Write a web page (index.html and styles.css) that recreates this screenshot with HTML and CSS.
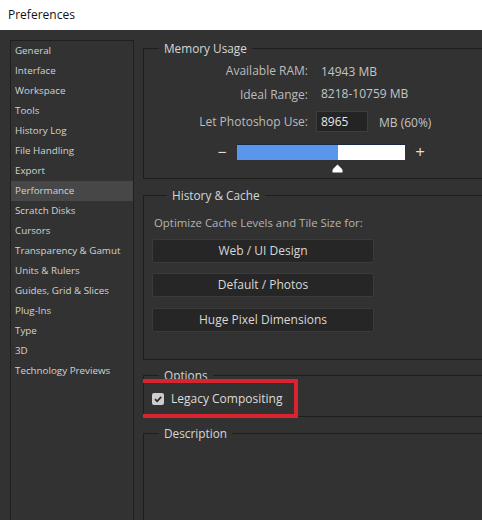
FILE: index.html
```html
<!DOCTYPE html>
<html>
<head>
<meta charset="utf-8">
<link rel="stylesheet" href="styles.css">
</head>
<body>
<div class="titlebar">Preferences</div>
<div class="main">
  <ul class="sidebar">
    <li>General</li>
    <li>Interface</li>
    <li>Workspace</li>
    <li>Tools</li>
    <li>History Log</li>
    <li>File Handling</li>
    <li>Export</li>
    <li class="active">Performance</li>
    <li>Scratch Disks</li>
    <li>Cursors</li>
    <li>Transparency &amp; Gamut</li>
    <li>Units &amp; Rulers</li>
    <li>Guides, Grid &amp; Slices</li>
    <li>Plug-Ins</li>
    <li>Type</li>
    <li>3D</li>
    <li>Technology Previews</li>
  </ul>
  <div class="content">
    <fieldset class="group memory">
      <legend>Memory Usage</legend>
      <div class="stats">
        <span class="label">Available RAM:</span><span class="value">14943 MB</span>
        <span class="label">Ideal Range:</span><span class="value">8218-10759 MB</span>
        <span class="label use">Let Photoshop Use:</span>
        <span class="use-row"><span class="input">8965</span><span class="value">MB (60%)</span></span>
      </div>
      <div class="slider">
        <span class="sign">&minus;</span>
        <div class="track-wrap">
          <div class="track"><div class="fill" style="width:60%"></div></div>
          <div class="thumb-row" style="padding-left:60%">
            <svg class="thumb" width="11" height="9" viewBox="0 0 11 9"><path d="M5.5 0.5 L9.5 4.5 Q10.5 5.5 10.5 6.5 L10.5 8.5 L0.5 8.5 L0.5 6.5 Q0.5 5.5 1.5 4.5 Z" fill="#ffffff"/></svg>
          </div>
        </div>
        <span class="sign plus">+</span>
      </div>
    </fieldset>

    <fieldset class="group history">
      <legend>History &amp; Cache</legend>
      <div class="hint">Optimize Cache Levels and Tile Size for:</div>
      <div class="buttons">
        <div class="btn">Web / UI Design</div>
        <div class="btn">Default / Photos</div>
        <div class="btn">Huge Pixel Dimensions</div>
      </div>
    </fieldset>

    <fieldset class="group options">
      <legend>Options</legend>
      <div class="check-row">
        <span class="checkbox"><svg width="12" height="12" viewBox="0 0 12 12"><path d="M3 6.2 L5.1 8.3 L9.2 3.8" fill="none" stroke="#2b2b2b" stroke-width="1.8"/></svg></span>
        <span class="check-label">Legacy Compositing</span>
      </div>
    </fieldset>

    <fieldset class="group description">
      <legend>Description</legend>
    </fieldset>
  </div>
</div>
</body>
</html>
```
FILE: styles.css
```css
* { box-sizing: border-box; }
html, body { margin: 0; padding: 0; }
body {
  width: 482px;
  height: 520px;
  overflow: hidden;
  background: #323232;
  font-family: "Open Sans", "Noto Sans", sans-serif;
  color: #cfcfcf;
}
.titlebar {
  height: 30px;
  background: #ffffff;
  color: #111111;
  font-size: 12px;
  line-height: 30px;
  padding-left: 8px;
}
.main {
  display: flex;
  height: 490px;
}
.sidebar {
  list-style: none;
  margin: 10px 0 0 10px;
  padding: 0;
  width: 124px;
  height: 490px;
  border: 1px solid #1f1f1f;
  border-bottom: none;
  flex: none;
}
.sidebar li {
  height: 20px;
  line-height: 19px;
  padding-left: 4px;
  font-size: 9.8px;
  color: #d2d2d2;
  white-space: nowrap;
}
.sidebar li.active {
  background: #474747;
}
.content {
  flex: 1;
  margin-left: 9px;
  padding-top: 10px;
  overflow: hidden;
}
.group {
  margin: 0;
  padding: 0;
  width: 380px;
  border: 1px solid #1e1e1e;
  border-right: none;
  min-width: 0;
}
.group legend {
  margin-left: 15px;
  padding: 0 5px;
  font-size: 11.8px;
  line-height: 16px;
  color: #d6d6d6;
}
.memory { height: 139px; }
.stats {
  display: grid;
  grid-template-columns: 164px auto;
  column-gap: 13px;
  margin-top: 3px;
  font-size: 12px;
  align-items: center;
}
.stats .label {
  text-align: right;
  color: #bcbcbc;
  line-height: 20px;
}
.stats .value {
  color: #c4c4c4;
  line-height: 20px;
}
.stats .label:nth-of-type(3) { margin-top: 3px; }
.stats .value:nth-of-type(2) { margin-top: 3px; }
.stats .use, .stats .use-row { margin-top: 5px; }
.use-row {
  display: flex;
  align-items: center;
  margin-left: -5px;
}
.input {
  width: 52px;
  height: 21px;
  line-height: 19px;
  padding-left: 4px;
  background: #242424;
  border: 1px solid #3e3e3e;
  color: #e6e6e6;
  font-size: 12px;
  margin-right: 11px;
}
.slider {
  display: flex;
  align-items: flex-start;
  margin-top: 11px;
  padding-left: 72px;
}
.sign {
  width: 12px;
  height: 16px;
  line-height: 16px;
  text-align: center;
  font-size: 16px;
  color: #dddddd;
  margin-right: 9px;
}
.sign.plus { margin-right: 0; margin-left: 9px; font-size: 17px; }
.track-wrap {
  width: 168px;
  display: flex;
  flex-direction: column;
}
.track {
  height: 16px;
  background: #ffffff;
  border-top: 1px solid #1a2a44;
  display: flex;
}
.fill {
  background: #5a97ec;
  height: 100%;
}
.thumb-row {
  height: 12px;
  padding-top: 4px;
}
.thumb {
  display: block;
  margin-left: -6px;
}
.history {
  margin-top: 8px;
  height: 173px;
  padding-left: 8px;
}
.hint {
  margin-top: 10px;
  line-height: 20px;
  font-size: 11.4px;
  color: #b4b4b4;
  margin-left: 2px;
}
.buttons {
  margin-top: 6px;
  display: flex;
  flex-direction: column;
  gap: 10px;
}
.btn {
  width: 222px;
  height: 24px;
  line-height: 22px;
  text-align: center;
  background: #262626;
  border: 1px solid #3a3a3a;
  border-radius: 2px;
  font-size: 12px;
  color: #d8d8d8;
}
.buttons .btn:last-child { margin-top: 1px; }
.options {
  margin-top: 7px;
  height: 50px;
}
.check-row {
  display: flex;
  align-items: center;
  gap: 7px;
  width: 144px;
  height: 23px;
  margin: 4px 0 0 2px;
  padding-left: 6px;
  outline: 4px solid #d9232e;
  outline-offset: 4px;
}
.checkbox {
  width: 12px;
  height: 12px;
  background: #cdcdcd;
  border-radius: 2px;
  display: flex;
  flex: none;
}
.check-label {
  font-size: 12px;
  color: #dcdcdc;
  white-space: nowrap;
}
.description {
  margin-top: 8px;
  height: 200px;
}
```
